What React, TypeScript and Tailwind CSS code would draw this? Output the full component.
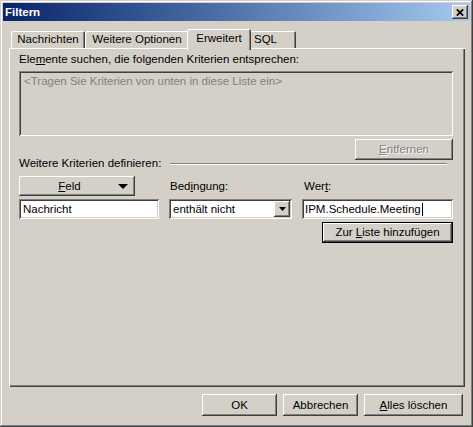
import type { ReactNode } from 'react'

const raised =
  'bg-[#d4d0c8] shadow-[inset_-1px_-1px_0_#404040,inset_1px_1px_0_#ffffff,inset_-2px_-2px_0_#808080,inset_2px_2px_0_#d4d0c8]'
const sunken =
  'shadow-[inset_1px_1px_0_#808080,inset_-1px_-1px_0_#ffffff,inset_2px_2px_0_#404040,inset_-2px_-2px_0_#d4d0c8]'

function Btn({ className, children }: { className: string; children: ReactNode }) {
  return <div className={`flex items-center justify-center ${raised} ${className}`}>{children}</div>
}

function Tab({ className, children }: { className: string; children: ReactNode }) {
  return (
    <div
      className={`flex items-center justify-center rounded-t-[2px] shadow-[inset_1px_1px_0_#ffffff,inset_-1px_0_0_#404040,inset_-2px_0_0_#808080] ${className}`}
    >
      {children}
    </div>
  )
}

export default function App() {
  return (
    <div className="flex h-[427px] w-[473px] select-none flex-col overflow-hidden bg-[#d4d0c8] p-[3px] font-['Liberation_Sans',Arial,sans-serif] text-[11.5px] leading-[13px] text-black shadow-[inset_-1px_-1px_0_#404040,inset_1px_1px_0_#d4d0c8,inset_-2px_-2px_0_#808080,inset_2px_2px_0_#ffffff]">
      {/* title bar */}
      <div className="flex h-[18px] items-center bg-linear-to-r from-[#0a246a] to-[#a6caf0] pl-[2px] pr-[2px]">
        <div className="flex-1 font-bold text-white">Filtern</div>
        <div className={`flex h-[14px] w-[16px] items-center justify-center ${raised}`}>
          <svg width="8" height="7" viewBox="0 0 8 7">
            <path d="M0.8 0.3 L7.2 6.7 M7.2 0.3 L0.8 6.7" stroke="#000" strokeWidth="1.7" />
          </svg>
        </div>
      </div>

      {/* tabs + panel */}
      <div className="ml-[6px] mt-[8px] flex flex-col">
        <div className="flex h-[19px] items-end pl-[2px]">
          <Tab className="h-[17px] w-[74px]">Nachrichten</Tab>
          <Tab className="h-[17px] w-[104px]">Weitere Optionen</Tab>
          <Tab className="relative z-10 -mx-[2px] -mb-[2px] h-[21px] w-[64px] bg-[#d4d0c8] pb-[2px]">Erweitert</Tab>
          <Tab className="h-[17px] w-[47px] justify-start pl-[5px]">SQL</Tab>
        </div>

        <div className="flex h-[339px] w-[456px] flex-col pl-[10px] pr-[12px] shadow-[inset_1px_1px_0_#ffffff,inset_-1px_-1px_0_#404040,inset_-2px_-2px_0_#808080]">
          <div className="mt-[5px] h-[13px]">
            Ele<u>m</u>ente suchen, die folgenden Kriterien entsprechen:
          </div>

          <div className={`mt-[5px] h-[65px] w-full px-[5px] pt-[4px] text-[#808080] ${sunken}`}>
            &lt;Tragen Sie Kriterien von unten in diese Liste ein&gt;
          </div>

          <Btn className="mt-[3px] h-[21px] w-[98px] self-end text-[#808080] [text-shadow:1px_1px_0_#ffffff]">
            <span>
              <u>E</u>ntfernen
            </span>
          </Btn>

          <div className="-mt-[3px] flex h-[13px] items-center pr-[6px]">
            <span>Weitere Kriterien definieren:</span>
            <div className="ml-[9px] h-0 flex-1 border-b border-t border-b-white border-t-[#808080]" />
          </div>

          <div className="mt-[6px] grid grid-cols-[140px_123px_151px] gap-x-[10px] gap-y-[3px]">
            <div className={`flex h-[20px] w-[116px] items-center ${raised}`}>
              <span className="flex-1 pl-[2px] text-center">
                <u>F</u>eld
              </span>
              <svg width="10" height="5" viewBox="0 0 10 5" className="mr-[7px]">
                <polygon points="0,0 10,0 5,5" fill="#000" />
              </svg>
            </div>
            <div className="self-center pl-[1px]">
              Bed<u>i</u>ngung:
            </div>
            <div className="self-center pl-[2px]">
              Wer<u>t</u>:
            </div>

            <div className={`flex h-[20px] items-center bg-white pl-[4px] ${sunken}`}>Nachricht</div>
            <div className={`flex h-[20px] items-center bg-white pl-[4px] pr-[2px] ${sunken}`}>
              <span className="flex-1">enthält nicht</span>
              <div className={`flex h-[16px] w-[16px] items-center justify-center ${raised}`}>
                <svg width="7" height="4" viewBox="0 0 7 4">
                  <polygon points="0,0 7,0 3.5,4" fill="#000" />
                </svg>
              </div>
            </div>
            <div className={`flex h-[20px] items-center bg-white pl-[3px] ${sunken}`}>
              <span>IPM.Schedule.Meeting</span>
              <span className="ml-[1px] h-[13px] w-[1px] bg-black" />
            </div>

            <div className="col-start-3 h-[21px] w-[131px] justify-self-end border border-black">
              <Btn className="h-full w-full">
                <span>
                  Zur <u>L</u>iste hinzufügen
                </span>
              </Btn>
            </div>
          </div>
        </div>
      </div>

      {/* dialog buttons */}
      <div className="mt-[7px] flex justify-end gap-[6px] pr-[7px]">
        <Btn className="h-[22px] w-[75px]">OK</Btn>
        <Btn className="h-[22px] w-[75px]">Abbrechen</Btn>
        <Btn className="h-[22px] w-[99px]">
          <span>
            <u>A</u>lles löschen
          </span>
        </Btn>
      </div>
    </div>
  )
}
